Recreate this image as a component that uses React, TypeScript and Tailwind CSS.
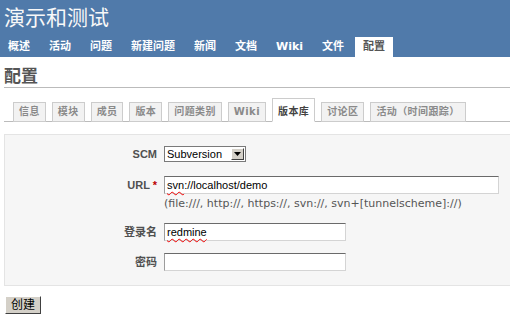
import React from "react";

const menu = ["概述", "活动", "问题", "新建问题", "新闻", "文档", "Wiki", "文件", "配置"];
const tabs = ["信息", "模块", "成员", "版本", "问题类别", "Wiki", "版本库", "讨论区", "活动（时间跟踪）"];

const inputCls =
  "h-[18px] bg-white border border-[#d4d4d4] border-t-[#6a6a6a] border-l-[#9c9c9c] px-[2px] text-[11px] leading-[16px] text-black";

const Label = ({ children }: { children: React.ReactNode }) => (
  <div className="w-[159px] pr-[7px] text-right text-[11px] font-bold text-[#505050]">{children}</div>
);

export default function App() {
  return (
    <div className="w-[510px] h-[319px] overflow-hidden bg-white font-['Liberation_Sans','Noto_Sans_CJK_SC',sans-serif]">
      {/* header */}
      <div className="h-[57px] bg-[#507aaa] flex flex-col justify-between">
        <h1 className="pl-[4px] pt-[4px] text-[21px] leading-[24px] text-[#f8f8f8] font-['Noto_Sans_CJK_SC',sans-serif]">
          演示和测试
        </h1>
        <ul className="flex gap-[3px] font-['DejaVu_Sans','Noto_Sans_CJK_SC',sans-serif]">
          {menu.map((m) => (
            <li
              key={m}
              className={
                m === "配置"
                  ? "h-[20px] px-[8px] leading-[20px] text-[11px] font-bold bg-white text-[#555]"
                  : "h-[20px] px-[8px] leading-[20px] text-[11px] font-bold text-white"
              }
            >
              {m}
            </li>
          ))}
        </ul>
      </div>

      {/* content */}
      <div className="pl-[4px]">
        <h2 className="mt-[8px] pb-[2px] leading-[20px] text-[17px] font-bold text-[#555] border-b border-[#bbb] font-['Noto_Sans_CJK_SC',sans-serif]">
          配置
        </h2>

        {/* tabs */}
        <ul className="mt-[10px] flex items-end gap-[6px] pl-[9px] border-b border-[#bbb] font-['DejaVu_Sans','Noto_Sans_CJK_SC',sans-serif]">
          {tabs.map((t) => (
            <li
              key={t}
              className={
                t === "版本库"
                  ? "-mb-px h-[24px] px-[5px] pt-[4px] border border-[#ccc] border-b-white bg-white text-[10px] tracking-[0.4px] leading-[18px] font-bold text-[#444]"
                  : "-mb-px h-[20px] px-[5px] border border-[#ccc] bg-[#f2f2f2] text-[10px] tracking-[0.4px] leading-[18px] font-bold text-[#8a8a8a]"
              }
            >
              {t}
            </li>
          ))}
        </ul>

        {/* box */}
        <div className="mt-[12px] w-[520px] h-[152px] bg-[#f6f6f6] border border-[#e4e4e4] pt-[11px]">
          <div className="flex items-center h-[16px]">
            <Label>SCM</Label>
            <div className="w-[82px] h-[16px] flex items-center bg-white border border-[#7a7a7a] pl-[2px] text-[11px] text-black">
              <span className="flex-1">Subversion</span>
              <span className="w-[13px] h-[12px] mr-[1px] flex items-center justify-center bg-[#d4d0c8] border border-white border-r-[#404040] border-b-[#404040]">
                <svg width="7" height="4" viewBox="0 0 7 4">
                  <path d="M0 0h7L3.5 4z" fill="#000" />
                </svg>
              </span>
            </div>
          </div>

          <div className="mt-[14px] flex items-center">
            <Label>
              URL <span className="text-[#bb0000]">*</span>
            </Label>
            <div className={inputCls + " w-[335px]"}>
              <span className="underline decoration-wavy decoration-[#e00] decoration-1 underline-offset-2">svn</span>
              ://localhost/demo
            </div>
          </div>
          <div className="mt-[3px] pl-[159px] text-[11px] leading-[14px] text-[#555] font-['DejaVu_Sans',sans-serif]">
            (file:///, http://, https://, svn://, svn+[tunnelscheme]://)
          </div>

          <div className="mt-[12px] flex items-center">
            <Label>登录名</Label>
            <div className={inputCls + " w-[182px]"}>
              <span className="underline decoration-wavy decoration-[#e00] decoration-1 underline-offset-2">redmine</span>
            </div>
          </div>

          <div className="mt-[12px] flex items-center">
            <Label>密码</Label>
            <div className={inputCls + " w-[182px]"} />
          </div>
        </div>

        <button className="mt-[10px] ml-[1px] w-[36px] h-[18px] bg-[#d4d0c8] border border-white border-r-[#404040] border-b-[#404040] text-[12px] leading-[14px] text-black">
          创建
        </button>
      </div>
    </div>
  );
}
